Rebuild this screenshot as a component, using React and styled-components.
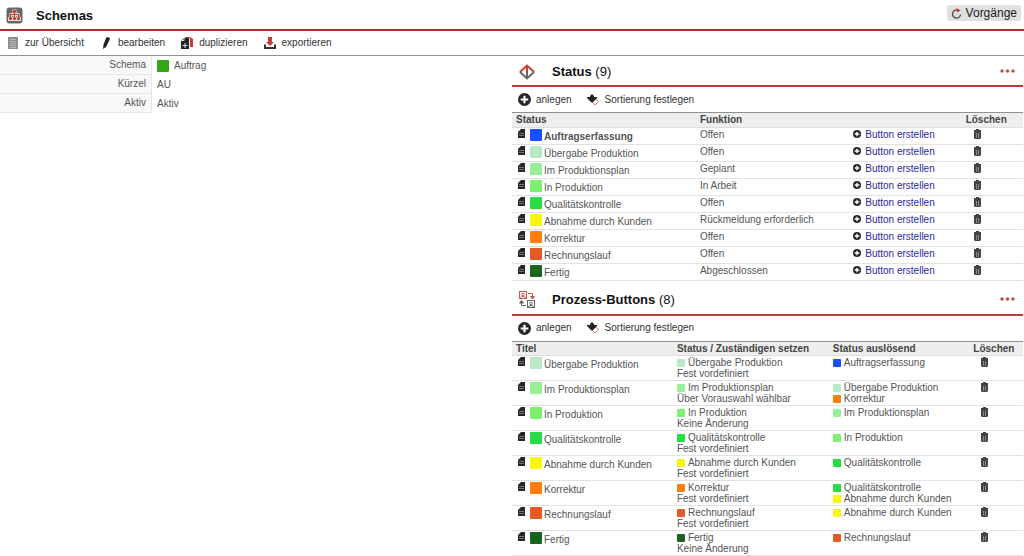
import React from "react";
import styled, { createGlobalStyle } from "styled-components";

const GlobalStyle = createGlobalStyle`
  * { box-sizing: border-box; }
  body {
    margin: 0;
    background: #fff;
    color: #555;
    font: 10px/12px "Liberation Sans", Arial, sans-serif;
  }
  svg { display: block; flex: none; }
`;

const Header = styled.header`
  display: flex;
  align-items: center;
  justify-content: space-between;
  height: 31px;
  padding: 0 ${(p) => (p.$page ? 3 : 8)}px 0 6px;
  border-bottom: 2px solid ${(p) => (p.$page ? "#a83030" : "#b83a34")};
`;

const TitleGroup = styled.div`
  display: flex;
  align-items: center;
  gap: ${(p) => (p.$page ? 13 : 16)}px;
  padding-top: 2px;
`;

const Title = styled.h1`
  margin: 0;
  color: #111;
  font-size: 13px;
  line-height: 16px;
  font-weight: bold;
  span { font-weight: normal; }
`;

const RefreshButton = styled.button`
  display: flex;
  align-items: center;
  gap: 4px;
  height: 16px;
  margin-bottom: 3px;
  padding: 0 4px;
  border: 0;
  border-radius: 3px;
  background: #e0e0e0;
  color: #222;
  font: 12px/16px "Liberation Sans", Arial, sans-serif;
`;

const MenuButton = styled.button`
  padding: 4px 0;
  border: 0;
  background: none;
`;

const Toolbar = styled.nav`
  display: flex;
  align-items: center;
  gap: ${(p) => (p.$page ? 15 : 14)}px;
  height: ${(p) => (p.$page ? 25 : 26)}px;
  padding-left: 6px;
  border-bottom: 1px solid #909090;
`;

const Action = styled.button`
  display: flex;
  align-items: center;
  gap: 5px;
  padding: 0;
  border: 0;
  background: none;
  color: #333;
  font: inherit;
`;

const Columns = styled.main`
  display: grid;
  grid-template-columns: 1fr 1fr;
  align-items: start;
`;

const Details = styled.dl`
  display: grid;
  grid-template-columns: 152px 1fr;
  margin: 0;
`;

const Label = styled.dt`
  padding: 3px 5px 3px 0;
  border-right: 1px solid #e6e6e6;
  border-bottom: 1px solid #e6e6e6;
  background: #f8f8f8;
  text-align: right;
`;

const Value = styled.dd`
  display: flex;
  align-items: center;
  gap: 5px;
  margin: 0;
  padding: 3px 5px;
`;

const Panels = styled.div`
  padding-right: 1px;
`;

const Panel = styled.section`
  margin-bottom: 4px;
`;

const Table = styled.table`
  width: 100%;
  table-layout: fixed;
  border-collapse: collapse;
  th {
    height: 14px;
    padding: 1px 4px 0;
    background: #eee;
    border-bottom: 1px solid #ddd;
    color: #444;
    text-align: left;
    line-height: 12px;
    white-space: nowrap;
  }
  td {
    height: ${(p) => p.$rowHeight}px;
    padding: 1px 4px 0;
    border-bottom: 1px solid #e2e2e2;
    vertical-align: top;
    line-height: 11px;
    white-space: nowrap;
  }
`;

const NameCell = styled.div`
  display: flex;
  align-items: flex-start;
  padding-left: 2px;
  font-weight: ${(p) => (p.$bold ? "bold" : "normal")};
  span { padding: 2px 0 0 2px; }
`;

const Swatch = styled.i`
  flex: none;
  width: ${(p) => p.$size}px;
  height: ${(p) => p.$size}px;
  border-radius: 1px;
  background: ${(p) => p.$color};
`;

const StatusLine = styled.div`
  display: flex;
  align-items: center;
  gap: 3px;
`;

const RowLink = styled.a`
  display: flex;
  align-items: center;
  gap: 4px;
  color: #2a2aa0;
  text-decoration: none;
`;

const IconButton = styled.button`
  display: block;
  padding: 0;
  border: 0;
  background: none;
`;

const DocButton = styled(IconButton)`
  margin-right: 4px;
`;

const DeleteButton = styled(IconButton)`
  margin-left: 7px;
`;

const SchemaIcon = () => (
  <svg width="17" height="17" viewBox="0 0 17 17">
    <rect x="0.5" y="0.5" width="16" height="16" rx="3" fill="#666" />
    <path d="M6.500 2.500h4v3.500h3v4h1.500v4h-13v-4h1.500V6h3z" fill="#eadcda" />
    <g fill="#c93c30">
      <rect x="7" y="3" width="3" height="3" rx="1" />
      <path d="M8 5h1v6h-1zM4 7h9v1H4zM4 7h1v4H4zM12 7h1v4h-1z" />
      <rect x="3" y="10" width="3" height="3" rx="1" /><rect x="7" y="10" width="3" height="3" rx="1" /><rect x="11" y="10" width="3" height="3" rx="1" />
    </g>
    <path d="M6.500 9v1M10.500 9v1" stroke="#666" />
  </svg>
);

const ListIcon = () => (
  <svg width="14" height="14" viewBox="0 0 14 14">
    <rect x="2" y="1" width="10" height="12" fill="#8e8e8e" />
    <path d="M4 3.500h6M4 5.500h6M4 7.500h6M4 9.500h6M4 11.500h6" stroke="#bbb" />
  </svg>
);

const PenIcon = () => (
  <svg width="14" height="14" viewBox="0 0 14 14">
    <path d="M7 2l1.500-1L11 2l-.5 2-3.500 7-3 2 .4-4z" fill="#222" />
  </svg>
);

const CopyIcon = () => (
  <svg width="14" height="14" viewBox="0 0 14 14">
    <path d="M5 1h5l3 2v8H6z" fill="#c93c30" />
    <path d="M9.500 2v9" stroke="#fff" />
    <path d="M1 5l3-3h5v11H1z" fill="#222" />
    <path d="M1 4.500h3V2" fill="none" stroke="#ddd" />
    <path d="M5 7v5M2.500 9.500h5" stroke="#ddd" />
  </svg>
);

const ExportIcon = () => (
  <svg width="14" height="14" viewBox="0 0 14 14">
    <path d="M5 1h4v5h2L7 10 3 6h2z" fill="#c93c30" />
    <path d="M2 8.500v3.500h10V8.500" fill="none" stroke="#333" strokeWidth="2" />
  </svg>
);

const PlusIcon = ({ size }) => (
  <svg width={size} height={size} viewBox="0 0 12 12">
    <circle cx="6" cy="6" r="6" fill="#262626" />
    <path d="M6 2.500v7M2.500 6h7" stroke="#fff" strokeWidth="2" />
  </svg>
);

const SortIcon = () => (
  <svg width="14" height="14" viewBox="0 0 14 14">
    <path d="M9 5.500l3.500 3L9 12 6 9z" fill="#fff" stroke="#d88078" />
    <path d="M6 1l2 2v1h3v1L6.500 9.500h-1L1 5V4h3V3z" fill="#222" />
  </svg>
);

const StatusIcon = () => (
  <svg width="18" height="18" viewBox="0 0 18 18" fill="none">
    <path d="M2 9l7-6.500L16 9" stroke="#c93c30" strokeWidth="2" />
    <path d="M2 9l7 6.500L16 9" stroke="#666" strokeWidth="2" />
    <path d="M9 3v6" stroke="#c93c30" strokeWidth="2" />
    <path d="M9 9v6" stroke="#666" strokeWidth="2" />
  </svg>
);

const ProcessIcon = () => (
  <svg width="18" height="18" viewBox="0 0 18 18" fill="none">
    <g stroke="#c9584e">
      <rect x="1.500" y="0.500" width="7" height="7" /><circle cx="5" cy="3.500" r="1.300" />
      <path d="M2.500 7c0-2 5-2 5 0M10 2.500h4.500V8" />
      <path d="M12.500 5.500h4L14.500 8z" fill="#c9584e" />
    </g>
    <g stroke="#666">
      <rect x="9.500" y="9.500" width="7" height="7" /><circle cx="13" cy="12.500" r="1.300" />
      <path d="M10.500 16c0-2 5-2 5 0M8 14.500H3.500V10" />
      <path d="M1.500 12h4L3.500 9.500z" fill="#666" />
    </g>
  </svg>
);

const DotsIcon = () => (
  <svg width="15" height="4" viewBox="0 0 15 4" fill="#c44a3c">
    <circle cx="2" cy="2" r="1.700" /><circle cx="7.500" cy="2" r="1.700" /><circle cx="13" cy="2" r="1.700" />
  </svg>
);

const RefreshIcon = () => (
  <svg width="11" height="11" viewBox="0 0 11 11" fill="none">
    <path d="M6 2A4 4 0 1 0 9.500 6.500" stroke="#555" strokeWidth="1.500" />
    <path d="M5.500 0l4 2.500-3.500 2z" fill="#c93c30" />
  </svg>
);

const DocIcon = () => (
  <svg width="8" height="9" viewBox="0 0 8 9">
    <path d="M0 3l3-3h4v9H0z" fill="#262626" />
    <path d="M1 4.500h5M1 6.500h5" stroke="#777" />
  </svg>
);

const TrashIcon = () => (
  <svg width="9" height="10" viewBox="0 0 9 10">
    <path d="M3 0h3v1h2v2H1V1h2zM1 3h7v6l-1 1H2L1 9z" fill="#444" />
    <path d="M3.500 4v5M5.500 4v5" stroke="#888" />
  </svg>
);

const COLORS = {
  "Auftragserfassung": "#1450ff",
  "Übergabe Produktion": "#b9e9c6",
  "Im Produktionsplan": "#9aee98",
  "In Produktion": "#7df070",
  "Qualitätskontrolle": "#28dc46",
  "Abnahme durch Kunden": "#f8f414",
  "Korrektur": "#ff7d0a",
  "Rechnungslauf": "#e65a28",
  "Fertig": "#1c641e",
};

const STATUSES = [
  ["Auftragserfassung", "Offen"],
  ["Übergabe Produktion", "Offen"],
  ["Im Produktionsplan", "Geplant"],
  ["In Produktion", "In Arbeit"],
  ["Qualitätskontrolle", "Offen"],
  ["Abnahme durch Kunden", "Rückmeldung erforderlich"],
  ["Korrektur", "Offen"],
  ["Rechnungslauf", "Offen"],
  ["Fertig", "Abgeschlossen"],
];

const PROCESSES = [
  ["Übergabe Produktion", "Fest vordefiniert", ["Auftragserfassung"]],
  ["Im Produktionsplan", "Über Vorauswahl wählbar", ["Übergabe Produktion", "Korrektur"]],
  ["In Produktion", "Keine Änderung", ["Im Produktionsplan"]],
  ["Qualitätskontrolle", "Fest vordefiniert", ["In Produktion"]],
  ["Abnahme durch Kunden", "Fest vordefiniert", ["Qualitätskontrolle"]],
  ["Korrektur", "Fest vordefiniert", ["Qualitätskontrolle", "Abnahme durch Kunden"]],
  ["Rechnungslauf", "Fest vordefiniert", ["Abnahme durch Kunden"]],
  ["Fertig", "Keine Änderung", ["Rechnungslauf"]],
];

const Name = ({ name, bold }) => (
  <NameCell $bold={bold}>
    <DocButton aria-label={name}><DocIcon /></DocButton>
    <Swatch $size={12} $color={COLORS[name]} />
    <span>{name}</span>
  </NameCell>
);

const StatusRef = ({ name }) => (
  <StatusLine><Swatch $size={8} $color={COLORS[name]} />{name}</StatusLine>
);

const Delete = () => <DeleteButton aria-label="Löschen"><TrashIcon /></DeleteButton>;

const PanelTop = ({ icon, title, count }) => (
  <>
    <Header as="div">
      <TitleGroup>{icon}<Title as="h2">{title} <span>({count})</span></Title></TitleGroup>
      <MenuButton aria-label="Menü"><DotsIcon /></MenuButton>
    </Header>
    <Toolbar>
      <Action><PlusIcon size={13} />anlegen</Action>
      <Action><SortIcon />Sortierung festlegen</Action>
    </Toolbar>
  </>
);

export default function App() {
  return (
    <>
      <GlobalStyle />
      <Header $page>
        <TitleGroup $page><SchemaIcon /><Title>Schemas</Title></TitleGroup>
        <RefreshButton><RefreshIcon />Vorgänge</RefreshButton>
      </Header>
      <Toolbar $page>
        <Action><ListIcon />zur Übersicht</Action>
        <Action><PenIcon />bearbeiten</Action>
        <Action><CopyIcon />duplizieren</Action>
        <Action><ExportIcon />exportieren</Action>
      </Toolbar>
      <Columns>
        <Details>
          <Label>Schema</Label>
          <Value><Swatch $size={12} $color="#32a814" />Auftrag</Value>
          <Label>Kürzel</Label>
          <Value>AU</Value>
          <Label>Aktiv</Label>
          <Value>Aktiv</Value>
        </Details>
        <Panels>
          <Panel>
            <PanelTop icon={<StatusIcon />} title="Status" count={9} />
            <Table $rowHeight={17}>
              <colgroup>
                <col style={{ width: "36%" }} /><col style={{ width: "30%" }} />
                <col style={{ width: "22%" }} /><col />
              </colgroup>
              <thead><tr><th>Status</th><th>Funktion</th><th /><th>Löschen</th></tr></thead>
              <tbody>
                {STATUSES.map(([name, role], i) => (
                  <tr key={name}>
                    <td><Name name={name} bold={i === 0} /></td>
                    <td>{role}</td>
                    <td><RowLink href="#"><PlusIcon size={8} />Button erstellen</RowLink></td>
                    <td><Delete /></td>
                  </tr>
                ))}
              </tbody>
            </Table>
          </Panel>
          <Panel>
            <PanelTop icon={<ProcessIcon />} title="Prozess-Buttons" count={8} />
            <Table $rowHeight={25}>
              <colgroup>
                <col style={{ width: "31.500%" }} /><col style={{ width: "30.500%" }} />
                <col style={{ width: "27.500%" }} /><col />
              </colgroup>
              <thead><tr><th>Titel</th><th>Status / Zuständigen setzen</th><th>Status auslösend</th><th>Löschen</th></tr></thead>
              <tbody>
                {PROCESSES.map(([name, mode, triggers]) => (
                  <tr key={name}>
                    <td><Name name={name} /></td>
                    <td><StatusRef name={name} />{mode}</td>
                    <td>{triggers.map((t) => <StatusRef key={t} name={t} />)}</td>
                    <td><Delete /></td>
                  </tr>
                ))}
              </tbody>
            </Table>
          </Panel>
        </Panels>
      </Columns>
    </>
  );
}
